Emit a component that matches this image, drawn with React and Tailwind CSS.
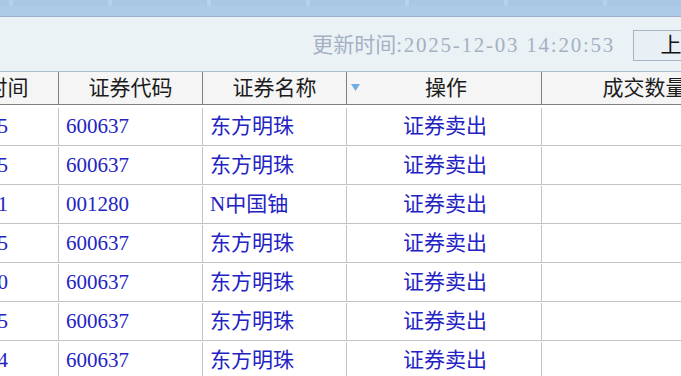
import React from "react";

const rows = [
  { t: "5", code: "600637", name: "东方明珠", op: "证券卖出" },
  { t: "5", code: "600637", name: "东方明珠", op: "证券卖出" },
  { t: "1", code: "001280", name: "N中国铀", op: "证券卖出" },
  { t: "5", code: "600637", name: "东方明珠", op: "证券卖出" },
  { t: "0", code: "600637", name: "东方明珠", op: "证券卖出" },
  { t: "5", code: "600637", name: "东方明珠", op: "证券卖出" },
  { t: "4", code: "600637", name: "东方明珠", op: "证券卖出" },
];

const tabs = [9, 95, 95, 95, 95, 95, 95, 95];

export default function App() {
  return (
    <div
      className="w-[681px] h-[376px] overflow-hidden bg-white flex flex-col"
      style={{ fontFamily: '"Liberation Serif", "Noto Sans CJK SC", serif' }}
    >
      {/* top bar */}
      <div className="h-[17px] shrink-0 bg-[#adcbe6] border-b border-[#9eb0c7] flex flex-col">
        <div className="h-[6px] flex gap-[4px] bg-[#b6d2ea]">
          {tabs.map((w, i) => (
            <div key={i} style={{ width: w }} className="shrink-0 h-full bg-[#a9c8e4]" />
          ))}
        </div>
      </div>

      {/* panel */}
      <div className="h-[55px] shrink-0 bg-[#eaf2f6] border-b border-[#adbdd2] flex items-center justify-end">
        <div className="flex items-center gap-[18px] mr-[-70px] pt-[2px]">
          <div className="text-[21px] leading-none text-[#a5b0c2] whitespace-nowrap">
            <span>更新时间</span>
            <span className="tracking-[1.75px]">:2025-12-03 14:20:53</span>
          </div>
          <div className="w-[118px] h-[31px] border border-[#a9b4c4] bg-[#e8f0f6] flex items-center justify-center text-[21px] text-[#111] leading-none">
            上一页
          </div>
        </div>
      </div>

      {/* table */}
      <div className="ml-[-85px] flex flex-col text-[21px] leading-none">
        <div className="flex h-[33px] shrink-0 bg-[#f5f5f5] border-b border-[#7f7f7f] text-[#1c1c1c]">
          <div className="w-[144px] shrink-0 border-r border-[#7f7f7f] flex items-center justify-center">成交时间</div>
          <div className="w-[144px] shrink-0 border-r border-[#7f7f7f] flex items-center justify-center">证券代码</div>
          <div className="w-[144px] shrink-0 border-r border-[#7f7f7f] flex items-center justify-center">证券名称</div>
          <div className="relative w-[195px] shrink-0 border-r border-[#7f7f7f] flex items-center justify-center pl-[4px]">
            <svg className="absolute left-[4px] top-[12px]" width="9" height="8" viewBox="0 0 9 8">
              <polygon points="0,0 9,0 4.5,7" fill="#70aee4" />
            </svg>
            操作
          </div>
          <div className="w-[206px] shrink-0 border-r border-[#7f7f7f] flex items-center justify-center">成交数量</div>
        </div>
        {rows.map((r, i) => (
          <div
            key={i}
            className={`flex shrink-0 border-b border-[#c3c3c3] text-[#2323c4] ${i === 0 ? "h-[41px] pt-[3px]" : "h-[39px] pt-[1px]"}`}
          >
            <div className="w-[144px] shrink-0 border-r border-[#c3c3c3] flex items-center justify-end pr-[50px]">{r.t}</div>
            <div className="w-[144px] shrink-0 border-r border-[#c3c3c3] flex items-center pl-[7px]">{r.code}</div>
            <div className="w-[144px] shrink-0 border-r border-[#c3c3c3] flex items-center pl-[7px]">{r.name}</div>
            <div className="w-[195px] shrink-0 border-r border-[#c3c3c3] flex items-center justify-center pl-[2px]">{r.op}</div>
            <div className="w-[206px] shrink-0 border-r border-[#c3c3c3]" />
          </div>
        ))}
      </div>
    </div>
  );
}
